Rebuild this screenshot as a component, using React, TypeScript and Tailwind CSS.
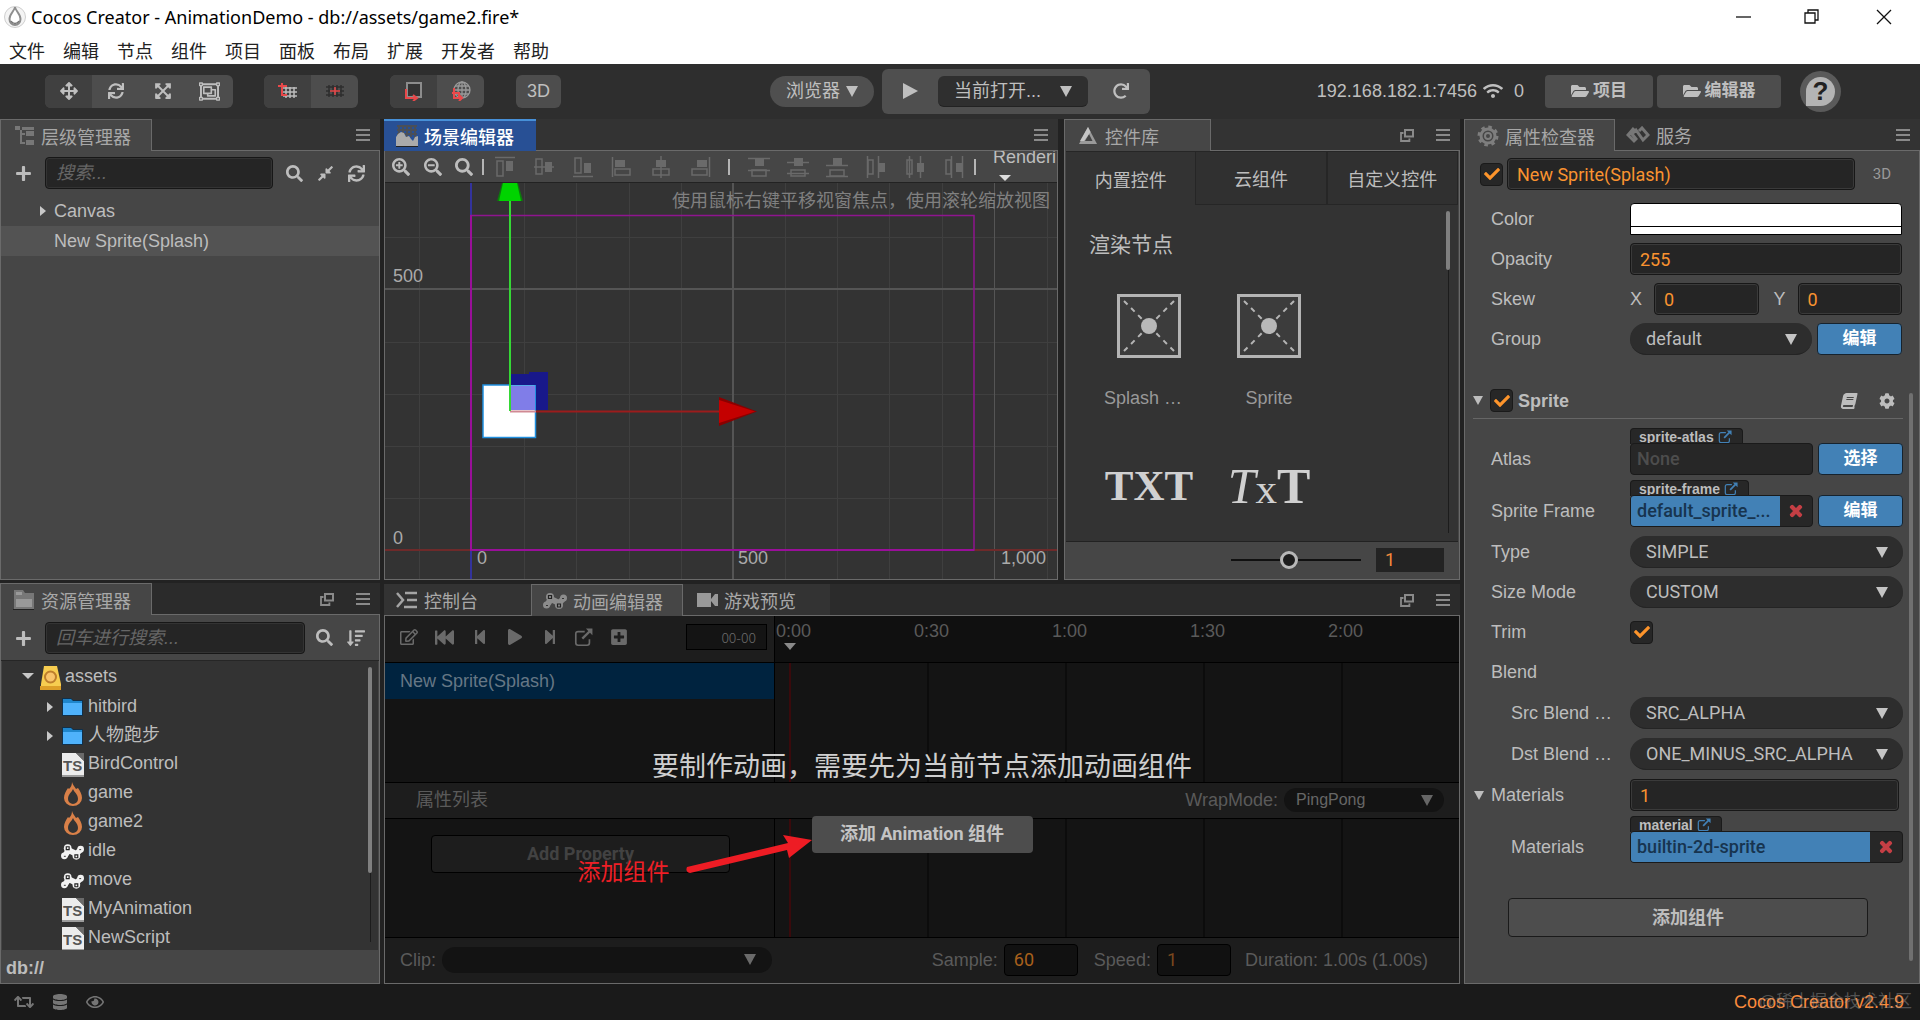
import { useState } from "react";
import type { ReactNode } from "react";
import {
  FaArrowsAlt,
  FaBook,
  FaCheck,
  FaCog,
  FaCompressAlt,
  FaDatabase,
  FaExpandArrowsAlt,
  FaFastBackward,
  FaFolderOpen,
  FaPlay,
  FaPlus,
  FaPlusSquare,
  FaRedo,
  FaRegEdit,
  FaRegEye,
  FaRegObjectGroup,
  FaRetweet,
  FaSearch,
  FaSearchMinus,
  FaSearchPlus,
  FaSortAmountDown,
  FaStepBackward,
  FaStepForward,
  FaSync,
  FaTimes,
  FaWifi,
} from "react-icons/fa";

const MENUS = ["文件", "编辑", "节点", "组件", "项目", "面板", "布局", "扩展", "开发者", "帮助"];

type AssetKind = "db" | "folder" | "ts" | "fire" | "anim";

type Asset = {
  name: string;
  kind: AssetKind;
};

const ASSETS: Asset[] = [
  { name: "hitbird", kind: "folder" },
  { name: "人物跑步", kind: "folder" },
  { name: "BirdControl", kind: "ts" },
  { name: "game", kind: "fire" },
  { name: "game2", kind: "fire" },
  { name: "idle", kind: "anim" },
  { name: "move", kind: "anim" },
  { name: "MyAnimation", kind: "ts" },
  { name: "NewScript", kind: "ts" },
];

const TIMES = ["0:00", "0:30", "1:00", "1:30", "2:00"];

/* ---------- icons ---------- */

function Caret({ className = "" }: { className?: string }) {
  return (
    <svg viewBox="0 0 12 11" className={`h-[11px] w-3 shrink-0 ${className}`} fill="currentColor">
      <path d="M0 0h12L6 11z" />
    </svg>
  );
}

function Fold({ open = false }: { open?: boolean }) {
  return (
    <svg viewBox="0 0 12 12" className="size-3 shrink-0" fill="#c8c8c8">
      {open ? <path d="M0 3h12L6 9z" /> : <path d="M3 1l6 5-6 5z" />}
    </svg>
  );
}

function MenuIcon() {
  return (
    <svg viewBox="0 0 14 12" className="h-3 w-[14px]" fill="#8a8a8a">
      <path d="M0 0h14v2H0zM0 5h14v2H0zM0 10h14v2H0z" />
    </svg>
  );
}

function PopoutIcon() {
  return (
    <svg viewBox="0 0 14 14" className="size-[14px]" fill="none" stroke="#8a8a8a" strokeWidth="1.8">
      <path d="M5 2h8v6.500H5z" strokeWidth="2" />
      <path d="M3.500 5H1v8h8.400v-2.500" />
    </svg>
  );
}

function LinkOutIcon({ className = "" }: { className?: string }) {
  return (
    <svg viewBox="0 0 16 16" className={className} fill="none" stroke="currentColor">
      <path d="M9 3H3.500Q1.500 3 1.500 5v7.500q0 2 2 2H11q2 0 2-2V9.500" strokeWidth="1.400" />
      <path d="M7 9l6.500-6.500" strokeWidth="2" />
      <path d="M10 .5h5.500V6z" fill="currentColor" stroke="none" />
    </svg>
  );
}

function CocosLogo() {
  return (
    <svg viewBox="0 0 24 24" className="size-6">
      <circle cx="12" cy="12" r="10.500" fill="#f4f4f4" stroke="#cfcfcf" />
      <path
        d="M12 2c.5 4 5.500 7 5.500 12a5.500 6 0 0 1-11 0c0-5 5-8 5.500-12z"
        fill="#fff"
        stroke="#8e8e8e"
        strokeWidth="2"
      />
      <path d="M8 16a4.500 4.500 0 0 0 8 0" fill="none" stroke="#777" strokeWidth="1.500" />
    </svg>
  );
}

function HierarchyIcon() {
  return (
    <svg viewBox="0 0 20 20" className="size-5" fill="#777">
      <path d="M0 0h5v4H0zM7 1h12v3H7zM5 4h2v14H5zM7 7h3v2H7zM7 16h3v2H7z" />
      <path d="M11 5h8v5h-8zM11 14h8v5h-8z" />
    </svg>
  );
}

function SceneIcon() {
  return (
    <svg viewBox="0 0 22 22" className="size-[22px]">
      <path
        d="M1 1h20M1 5h20M1 9h20M3 0v12M7 0v12M11 0v12M15 0v12M19 0v14"
        stroke="#4a4f58"
        strokeWidth="2"
      />
      <path d="M0 21v-9l2-3 3-2 3 1 2 4 3-1 2 3 2 2 2-4 3-1v10z" fill="#aaa" />
      <path d="M0 21.500h22" stroke="#222" />
    </svg>
  );
}

function WidgetIcon() {
  return (
    <svg viewBox="0 0 18 18" className="size-[18px]">
      <path d="M9 0L18 17H0z" fill="#9a9a9a" />
      <path d="M10 7l3.500 7H6z" fill="#444" />
      <path d="M9 0l2.500 5L5 14H1z" fill="#c4c4c4" />
    </svg>
  );
}

function InspectorIcon() {
  return (
    <svg viewBox="0 0 22 22" className="size-[22px]" fill="none" stroke="#7e7e7e">
      <circle cx="11" cy="11" r="9" strokeWidth="3" strokeDasharray="3.500 3.570" />
      <circle cx="11" cy="11" r="7" strokeWidth="3" />
      <circle cx="11" cy="11" r="3" strokeWidth="2" />
    </svg>
  );
}

function ServiceIcon() {
  return (
    <svg viewBox="0 0 24 18" className="h-[18px] w-6" fill="none" stroke="#777" strokeWidth="3">
      <path d="M8 2L2 9l6 6 2-2-4-5 4-4 7 10 5-5-6-7-3 3" />
    </svg>
  );
}

function AssetsIcon() {
  return (
    <svg viewBox="0 0 22 20" className="h-5 w-[22px]">
      <path d="M1 0h9l2 3h9v16H1z" fill="#777" />
      <path d="M3 2h6v3H3zM3 9h16v8H3z" fill="#999" />
      <path d="M0 19.500h21" stroke="#222" />
    </svg>
  );
}

function ConsoleIcon() {
  return (
    <svg viewBox="0 0 22 18" className="h-[18px] w-[22px]" fill="none" stroke="#a4a4a4" strokeWidth="2.500">
      <path d="M1 2l6 7-6 7M9 2h12M11 9h10M8 16h13" />
    </svg>
  );
}

function PreviewIcon() {
  return (
    <svg viewBox="0 0 21 14" className="h-[14px] w-[21px]" fill="#999">
      <path d="M0 0h14v14H0zM14 6l4-5h3v12h-3l-4-5z" />
    </svg>
  );
}

function AnimIcon({ color, className = "" }: { color: string; className?: string }) {
  return (
    <svg viewBox="0 0 24 16" className={className}>
      <path d="M4 12l4-6 8 4 4-4" stroke={color} strokeWidth="6" fill="none" />
      <g fill={color}>
        <circle cx="3.500" cy="12" r="3.500" />
        <circle cx="7" cy="4" r="4" />
        <circle cx="16" cy="12" r="4" />
        <circle cx="20.500" cy="5" r="3.500" />
      </g>
      <path d="M5.500 2.500h3v3h-3zM14.500 11h3v3h-3z" fill={color} stroke="#222" strokeWidth="1.200" />
      <path d="M3 12.500h2M19 5.500h2" stroke="#333" />
    </svg>
  );
}

function AssetIcon({ kind }: { kind: AssetKind }) {
  if (kind === "db") {
    return (
      <svg viewBox="0 0 22 24" className="h-6 w-[22px]">
        <path d="M4 0h13l4 18v6H1v-6z" fill="#f7cd50" />
        <path d="M0 20h21v4H0z" fill="#dd9f28" />
        <circle cx="10.500" cy="11" r="5.500" fill="#f9c46a" stroke="#bd7e2c" strokeWidth="2" />
      </svg>
    );
  }
  if (kind === "folder") {
    return (
      <svg viewBox="0 0 22 18" className="h-[18px] w-[22px]">
        <path d="M0 0h9l2 2h10v16H0z" fill="#11304a" />
        <path d="M1 1h8l2 2h9v14H1z" fill="#1f86cc" />
        <path d="M1 5h19v12H1z" fill="#4fb2fb" />
      </svg>
    );
  }
  if (kind === "ts") {
    return (
      <svg viewBox="0 0 22 24" className="h-6 w-[22px]">
        <path d="M0 0h14l8 8v15H0z" fill="#ececec" />
        <path d="M14 0h8v8z" fill="#6a6a6a" />
        <path d="M0 22h22v2H0z" fill="#9c9c9c" />
        <text x="1" y="18" fontSize="15" fontWeight="700" fill="#555">
          TS
        </text>
      </svg>
    );
  }
  if (kind === "fire") {
    return (
      <svg viewBox="0 0 20 24" className="h-6 w-5">
        <path
          d="M9 0c1 3 2 4 4 7l2-1c2 3 4 6 4 10a9 8 0 0 1-18 0c0-4 2-7 4-10l1 1c2-2 3-4 3-7z"
          fill="#d98048"
        />
        <path d="M10 7c1 3 5 5 5 10a5 5 0 0 1-10 0c0-5 4-7 5-10z" fill="#333" />
      </svg>
    );
  }
  return <AnimIcon color="#f2f2f2" className="h-4 w-6" />;
}

type AlignTool = {
  line: string;
  box: string;
  solid: string;
};

// guide, outline and solid shapes of each align / distribute tool
const ALIGN_TOOLS: AlignTool[] = [
  { line: "M1 1.500h20", box: "M3 5h6v15H3z", solid: "M12 5h7v10h-7z" },
  { line: "M1 11h20", box: "M3 3h6v15H3z", solid: "M12 6h7v10h-7z" },
  { line: "M1 20.500h20", box: "M3 2h6v15H3z", solid: "M12 7h7v10h-7z" },
  { line: "M1.500 1v20", box: "M4 13h15v6H4z", solid: "M4 4h10v7H4z" },
  { line: "M11 0v22", box: "M3 13h16v6H3z", solid: "M6 4h10v7H6z" },
  { line: "M20.500 1v20", box: "M3 13h15v6H3z", solid: "M8 4h10v7H8z" },
];

const DISTRIBUTE_TOOLS: AlignTool[] = [
  { line: "M0 2.500h22M0 14.500h22", box: "M4 14h14v6H4z", solid: "M7 3h9v7H7z" },
  { line: "M0 6.500h22M0 17.500h22", box: "M4 14h14v6H4z", solid: "M7 2h9v8H7z" },
  { line: "M0 9.500h22M0 20.500h22", box: "M4 14h14v6H4z", solid: "M7 2h9v8H7z" },
  { line: "M2.500 0v22M13.500 0v22", box: "M3 4h5v14H3z", solid: "M13 7h7v9h-7z" },
  { line: "M5.500 0v22M16.500 0v22", box: "M3 4h5v14H3z", solid: "M13 7h7v9h-7z" },
  { line: "M8.500 0v22M19.500 0v22", box: "M3 4h5v14H3z", solid: "M13 7h7v9h-7z" },
];

function AlignIcon({ tool }: { tool: AlignTool }) {
  return (
    <svg viewBox="0 0 22 22" className="size-[22px]" fill="none" stroke="#6a6a6a" strokeWidth="1.500">
      <path d={tool.line} />
      <path d={tool.box} />
      <path d={tool.solid} fill="#6a6a6a" stroke="none" />
    </svg>
  );
}

/* ---------- shared controls ---------- */

function Panel({
  header,
  popout = false,
  strip,
  children,
}: {
  header: ReactNode;
  popout?: boolean;
  strip: string;
  children: ReactNode;
}) {
  return (
    <section className="flex h-full min-h-0 min-w-0 flex-col">
      <header className={`flex h-8 shrink-0 ${strip}`}>
        {header}
        <div className="flex flex-1 items-center justify-end gap-[22px] border-b border-[#6a6a6a] pr-2.5">
          {popout && (
            <button type="button" aria-label="popout">
              <PopoutIcon />
            </button>
          )}
          <button type="button" aria-label="menu">
            <MenuIcon />
          </button>
        </div>
      </header>
      <div className="flex min-h-0 flex-1 flex-col border border-t-0 border-[#6a6a6a] bg-[#464646]">
        {children}
      </div>
    </section>
  );
}

function Tab({ icon, label, className }: { icon: ReactNode; label: string; className: string }) {
  return (
    <button
      type="button"
      className={`flex shrink-0 items-center gap-1.5 whitespace-nowrap border-[#6a6a6a] pl-3 ${className}`}
    >
      {icon}
      <span className="pt-1">{label}</span>
    </button>
  );
}

function Check({ label }: { label: string }) {
  const [checked, setChecked] = useState(true);

  return (
    <label className="relative flex size-[23px] shrink-0 items-center justify-center">
      <input
        type="checkbox"
        aria-label={label}
        checked={checked}
        onChange={(event) => setChecked(event.target.checked)}
        className="absolute inset-0 appearance-none rounded border border-[#1a1a1a] bg-[#272727]"
      />
      {checked && <FaCheck className="pointer-events-none relative size-4 text-[#fd942b]" />}
    </label>
  );
}

function Field({ id, value, className = "" }: { id: string; value: string; className?: string }) {
  return (
    <input
      id={id}
      aria-label={id}
      type="text"
      defaultValue={value}
      className={`h-8 min-w-0 rounded border border-[#171717] bg-[#252525] px-[9px] font-['Roboto','Noto_Sans_CJK_SC',sans-serif] text-[#f99330] shadow-[inset_0_0_0_1px_#3a3a3a] outline-none ${className}`}
    />
  );
}

function Dropdown({ id, value }: { id: string; value: string }) {
  return (
    <div className="relative flex flex-1 items-center">
      <select
        id={id}
        aria-label={id}
        className="h-8 w-full appearance-none rounded-full border-b border-[#242424] bg-[#2d2d2d] pl-4 font-['Roboto',sans-serif] text-[#bdbdbd] outline-none"
      >
        <option>{value}</option>
      </select>
      <Caret className="pointer-events-none absolute right-[15px] text-[#c4c4c4]" />
    </div>
  );
}

function BlueButton({ children }: { children: ReactNode }) {
  return (
    <button
      type="button"
      className="h-8 w-[85px] shrink-0 rounded border border-[#16232e] bg-[#4281b6] text-[17px] font-bold text-white"
    >
      {children}
    </button>
  );
}

function Row({
  id,
  label,
  indent = false,
  fold = false,
  children,
}: {
  id?: string;
  label: string;
  indent?: boolean;
  fold?: boolean;
  children?: ReactNode;
}) {
  return (
    <div className="flex h-8 items-center">
      <div className="flex w-[157px] shrink-0 items-center">
        <span className={indent ? "w-[38px]" : "w-[18px]"}>
          {fold && <Caret className="ml-px h-[10px] w-[10px]" />}
        </span>
        <label htmlFor={id}>{label}</label>
      </div>
      <div className="flex min-w-0 flex-1 items-center gap-[5px]">{children}</div>
    </div>
  );
}

function AssetSlot({ type, value }: { type: string; value?: string }) {
  return (
    <div className="relative h-8 min-w-0 flex-1">
      <div className="absolute bottom-[31px] left-0 flex h-4 items-center gap-1 rounded-t border border-b-0 border-[#1a1a1a] bg-[#272727] pr-2.5 pl-2 text-[14px] font-bold leading-4">
        {type}
        <LinkOutIcon className="size-[14px] text-[#4281b6]" />
      </div>
      <div className="relative flex h-8 items-stretch overflow-hidden rounded border border-[#1a1a1a] bg-[#272727] font-['Roboto',sans-serif] font-medium">
        {value ? (
          <>
            <div className="flex flex-1 items-center bg-[#4281b6] pl-1.5 text-[#17344f]">{value}</div>
            <button
              type="button"
              aria-label="clear"
              className="flex w-8 items-center justify-center text-[#c53f45]"
            >
              <FaTimes className="size-4" stroke="currentColor" strokeWidth="40" />
            </button>
          </>
        ) : (
          <div className="flex items-center pl-1.5 text-[#4d4d4d]">None</div>
        )}
      </div>
    </div>
  );
}

/* ---------- top bars ---------- */

function TitleBar() {
  return (
    <div className="flex h-[34px] shrink-0 items-center bg-white pl-[3px] text-black">
      <CocosLogo />
      <h1 className="ml-1 flex-1 font-['Noto_Sans',sans-serif] text-[18px]">
        Cocos Creator - AnimationDemo - db://assets/game2.fire*
      </h1>
      <svg viewBox="0 0 184 20" className="mr-[18px] h-5 w-[184px]" fill="none" stroke="#111" strokeWidth="1.300">
        <path d="M18 10h15" />
        <path d="M87 6h10v10H87zM90 6V3h10v10h-3" />
        <path d="M159 3l14 14M173 3l-14 14" />
      </svg>
    </div>
  );
}

function MenuBar() {
  return (
    <nav className="flex h-[30px] shrink-0 items-center gap-[18px] bg-white pl-[9px] text-[#222]">
      {MENUS.map((menu) => (
        <button type="button" key={menu} className="pt-1.5">
          {menu}
        </button>
      ))}
    </nav>
  );
}

const TOOL = "flex h-full w-[47px] items-center justify-center";

function Toolbar() {
  return (
    <div className="flex h-[55px] shrink-0 items-center bg-[#2e2e2e] pb-px pl-[45px] text-[#bfbfbf]">
      <div className="flex h-[33px] overflow-hidden rounded-md bg-[#4d4d4d]">
        <button type="button" aria-label="move" className={`${TOOL} bg-[#404040]`}>
          <FaArrowsAlt className="size-[18px]" />
        </button>
        <button type="button" aria-label="rotate" className={TOOL}>
          <FaSync className="size-4" />
        </button>
        <button type="button" aria-label="scale" className={TOOL}>
          <FaExpandArrowsAlt className="size-[18px]" />
        </button>
        <button type="button" aria-label="rect" className={TOOL}>
          <FaRegObjectGroup className="size-[21px]" />
        </button>
      </div>

      <div className="ml-[31px] flex h-[33px] overflow-hidden rounded-md bg-[#4d4d4d]">
        <button type="button" aria-label="anchor" className={`${TOOL} bg-[#404040]`}>
          <svg viewBox="0 0 20 16" className="h-4 w-5" fill="none">
            <path d="M5 5h14M5 9h14M5 13h14M8 4v11M12 4v11M16 4v11" stroke="#bbb" strokeWidth="1.500" />
            <path d="M0 3h9M4 0v12h5" stroke="#e8484a" strokeWidth="2" />
          </svg>
        </button>
        <button type="button" aria-label="center" className={TOOL}>
          <svg viewBox="0 0 20 16" className="h-4 w-5" fill="none">
            <path d="M1 4h18M1 8h18M1 12h18M4 2v12M8 2v12M12 2v12M16 2v12" stroke="#2e2e2e" strokeWidth="1.500" />
            <path d="M5 8h10M10 4v8" stroke="#e8484a" strokeWidth="1.500" />
          </svg>
        </button>
      </div>

      <div className="ml-8 flex h-[33px] overflow-hidden rounded-md bg-[#4d4d4d]">
        <button type="button" aria-label="local" className={`${TOOL} bg-[#404040]`}>
          <svg viewBox="0 0 20 20" className="size-5" fill="none">
            <path d="M3 2h14v14H3z" stroke="#8c8c8c" strokeWidth="2" fill="#333" />
            <path d="M2 8v9h10M9 14l4 3-4 3" stroke="#e8484a" strokeWidth="2" />
          </svg>
        </button>
        <button type="button" aria-label="global" className={TOOL}>
          <svg viewBox="0 0 20 20" className="size-5" fill="none">
            <g stroke="#999" strokeWidth="1.300">
              <circle cx="11" cy="9" r="8" />
              <ellipse cx="11" cy="9" rx="4" ry="8" />
              <path d="M3 9h16M11 1v16M4 5h14M4 13h14" />
            </g>
            <path d="M3 7v10h7M8 14l3 3-3 3M1 12h7v5" stroke="#e8484a" strokeWidth="2" />
          </svg>
        </button>
      </div>

      <button type="button" className="ml-8 h-[33px] w-[45px] rounded-md bg-[#4d4d4d]">
        3D
      </button>

      <div className="ml-[209px] flex items-center gap-2">
        <button type="button" className="flex h-[31px] items-center gap-1.5 rounded-full bg-[#4f4f4f] px-4">
          浏览器
          <Caret />
        </button>
        <div className="flex h-[45px] items-center rounded-md bg-[#4f4f4f]">
          <button type="button" aria-label="play" className="flex w-[56px] justify-center">
            <svg viewBox="0 0 15 16" className="h-4 w-[15px]" fill="currentColor">
              <path d="M0 0l15 8-15 8z" />
            </svg>
          </button>
          <div className="relative flex items-center">
            <select
              aria-label="scene"
              className="h-[31px] w-[150px] appearance-none rounded-md border-b border-[#222] bg-[#2f2f2f] pl-4 outline-none"
            >
              <option>当前打开...</option>
            </select>
            <Caret className="pointer-events-none absolute right-4" />
          </div>
          <button type="button" aria-label="reload" className="flex w-[62px] justify-center pl-1">
            <FaRedo className="size-4" />
          </button>
        </div>
      </div>

      <div className="ml-auto flex items-center">
        <span>192.168.182.1:7456</span>
        <FaWifi className="ml-1.5 size-5" />
        <span className="ml-[11px]">0</span>
        <button
          type="button"
          className="ml-[21px] flex h-[33px] w-[108px] items-center justify-center gap-1 rounded bg-[#4d4d4d] text-[17px] font-bold"
        >
          <FaFolderOpen className="size-[18px]" />
          项目
        </button>
        <button
          type="button"
          className="ml-1 flex h-[33px] w-[124px] items-center justify-center gap-1 rounded bg-[#4d4d4d] text-[17px] font-bold"
        >
          <FaFolderOpen className="size-[18px]" />
          编辑器
        </button>
        <button
          type="button"
          aria-label="help"
          className="mr-[79px] ml-[19px] flex size-[41px] items-center justify-center rounded-full bg-[#5a5a5a]"
        >
          <span className="flex size-[29px] items-center justify-center rounded-full rounded-bl-md bg-[#b4b4b4] text-[26px] font-bold text-[#222]">
            ?
          </span>
        </button>
      </div>
    </div>
  );
}

/* ---------- left column ---------- */

function SearchBox({ placeholder }: { placeholder: string }) {
  return (
    <input
      type="search"
      aria-label={placeholder}
      placeholder={placeholder}
      className="h-8 min-w-0 flex-1 rounded border border-[#171717] bg-[#252525] px-2.5 shadow-[inset_0_0_0_1px_#333] outline-none placeholder:text-[#666] placeholder:italic"
    />
  );
}

function Hierarchy() {
  return (
    <Panel
      strip="bg-[#333333]"
      header={
        <Tab
          icon={<HierarchyIcon />}
          label="层级管理器"
          className="w-[152px] border border-b-0 bg-[#464646] pl-3.5 text-[#a8a8a8]"
        />
      }
    >
      <div className="flex items-center gap-[13px] px-3.5 pt-1.5">
        <button type="button" aria-label="add">
          <FaPlus className="size-[17px]" />
        </button>
        <SearchBox placeholder="搜索..." />
        <div className="flex gap-[14px]">
          <FaSearch className="size-[17px]" />
          <FaCompressAlt className="size-[17px]" />
          <FaSync className="size-[17px]" />
        </div>
      </div>
      <ul className="pt-[7px]">
        <li className="flex h-[30px] items-center gap-[5px] pl-9">
          <Fold />
          Canvas
        </li>
        <li className="flex h-[30px] items-center bg-[#535353] pl-[53px]">New Sprite(Splash)</li>
      </ul>
    </Panel>
  );
}

function AssetsPanel() {
  return (
    <Panel
      popout
      strip="bg-[#2b2b2b]"
      header={
        <Tab
          icon={<AssetsIcon />}
          label="资源管理器"
          className="w-[152px] border border-b-0 bg-[#464646] text-[#a8a8a8]"
        />
      }
    >
      <div className="flex items-center gap-[11px] border-b border-[#262626] px-3.5 pt-[7px] pb-1.5">
        <button type="button" aria-label="add" className="mr-0.5">
          <FaPlus className="size-[17px]" />
        </button>
        <SearchBox placeholder="回车进行搜索..." />
        <div className="flex gap-[14px]">
          <FaSearch className="size-[17px]" />
          <FaSortAmountDown className="size-[18px]" />
        </div>
      </div>
      <div className="mx-px flex min-h-0 flex-1 bg-[#333333]">
        <ul className="flex-1 overflow-hidden">
          <li className="flex h-[29px] items-center gap-[3px] pl-5">
            <Fold open />
            <span className="flex w-[25px] justify-end pt-1">
              <AssetIcon kind="db" />
            </span>
            <span>assets</span>
          </li>
          {ASSETS.map((asset) => (
            <li key={asset.name} className="flex h-[29px] items-center pl-[42px]">
              <span className="flex w-[17px] pt-1">{asset.kind === "folder" && <Fold />}</span>
              <span className="flex w-[27px] shrink-0 justify-center pt-1 pr-1">
                <AssetIcon kind={asset.kind} />
              </span>
              <span className={asset.kind === "folder" ? "pt-0.5" : ""}>{asset.name}</span>
            </li>
          ))}
        </ul>
        <div className="mt-1.5 mr-[6px] mb-2 flex w-1 flex-col items-center bg-[linear-gradient(#1c1c1c,#1c1c1c)] bg-[length:1px_100%] bg-center bg-no-repeat">
          <div className="h-3/4 w-1 rounded-full bg-[#808080]" />
        </div>
      </div>
      <div className="flex h-[33px] shrink-0 items-center pt-0.5 pl-[5px] font-bold">db://</div>
    </Panel>
  );
}

/* ---------- scene ---------- */

const GRID_X = [34, 139, 191, 244, 296, 400, 452, 504, 557, 662];
const GRID_Y = [54, 159, 211, 263, 315];

function SceneCanvas() {
  return (
    <div className="relative min-h-0 flex-1 overflow-hidden bg-[#333333]">
      <svg className="absolute inset-0 size-full">
        <g stroke="#3f3f3f">
          {GRID_X.map((x) => (
            <line key={x} x1={x + 0.5} x2={x + 0.5} y1="0" y2="100%" />
          ))}
          {GRID_Y.map((y) => (
            <line key={y} x1="0" x2="100%" y1={y + 0.5} y2={y + 0.5} />
          ))}
        </g>
        <g stroke="#555">
          <line x1="348" x2="348" y1="0" y2="100%" strokeWidth="2" />
          <line x1="609.500" x2="609.500" y1="0" y2="100%" />
          <line x1="0" x2="100%" y1="106" y2="106" strokeWidth="2" />
        </g>
        <line x1="86" x2="86" y1="0" y2="100%" stroke="#33339c" strokeWidth="2" />
        <line x1="0" x2="100%" y1="367" y2="367" stroke="#6e2a2a" strokeWidth="2" />
        <rect x="86" y="32.500" width="503" height="334.500" fill="none" stroke="#8f158f" strokeWidth="1.500" />
        <path d="M86 32v335h503" fill="none" stroke="#990f99" strokeWidth="2" />
        <rect x="98" y="202" width="52.500" height="52.500" fill="#fff" stroke="#2090e0" strokeWidth="1.500" />
        <path d="M126 191h18v-2h19v38h-12v-25h-25z" fill="#18188a" />
        <rect x="126" y="203" width="24" height="24" fill="#807de8" />
        <line x1="125" x2="151" y1="228.500" y2="228.500" stroke="#d08a94" strokeWidth="2" />
        <line x1="151" x2="336" y1="228.500" y2="228.500" stroke="#9c1c1c" strokeWidth="2" />
        <path d="M334 214l38 14.500L334 243z" fill="#8a0000" />
        <path d="M334 217l36 11.500L334 240z" fill="#c40000" />
        <line x1="125" x2="125" y1="16" y2="228" stroke="#35d835" strokeWidth="2" />
        <path d="M117 0h16l5 18h-26z" fill="#0d7a0d" />
        <path d="M118 0h14l4 18h-22z" fill="#00d400" />
        <g fill="#aaa" fontSize="18">
          <text x="8" y="99">500</text>
          <text x="8" y="361">0</text>
          <text x="92" y="381">0</text>
          <text x="353" y="381">500</text>
          <text x="616" y="381">1,000</text>
        </g>
      </svg>
      <p className="relative pt-1.5 pr-[7px] text-right text-[#808080]">
        使用鼠标右键平移视窗焦点，使用滚轮缩放视图
      </p>
    </div>
  );
}

function ScenePanel() {
  return (
    <Panel
      strip="bg-[#333333]"
      header={
        <Tab
          icon={<SceneIcon />}
          label="场景编辑器"
          className="w-[152px] border-t-2 border-[#4790d8]! bg-[#285095] font-medium text-white"
        />
      }
    >
      <div className="flex h-8 shrink-0 items-center overflow-hidden border-b border-[#222] pl-[7px]">
        <div className="flex w-[81px] shrink-0 justify-between">
          <FaSearchPlus className="size-[18px]" />
          <FaSearchMinus className="size-[18px]" />
          <FaSearch className="size-[18px]" />
        </div>
        <i className="ml-[9px] h-4 w-0.5 bg-[#b5b5b5]" />
        <div className="ml-[10px] flex gap-[17px]">
          {ALIGN_TOOLS.map((tool) => (
            <AlignIcon key={tool.line} tool={tool} />
          ))}
        </div>
        <i className="ml-[17px] h-4 w-0.5 shrink-0 bg-[#b5b5b5]" />
        <div className="ml-[18px] flex gap-[17px]">
          {DISTRIBUTE_TOOLS.map((tool) => (
            <AlignIcon key={tool.line} tool={tool} />
          ))}
        </div>
        <i className="ml-[9px] h-4 w-0.5 shrink-0 bg-[#b5b5b5]" />
        <button type="button" className="ml-[17px] flex h-10 flex-col leading-5">
          Renderi
          <svg viewBox="0 0 12 6" className="mt-2 ml-[6px] h-1.5 w-3 shrink-0" fill="#ddd">
            <path d="M0 0h12L6 6z" />
          </svg>
        </button>
      </div>
      <SceneCanvas />
    </Panel>
  );
}

/* ---------- widget library ---------- */

function SpriteGlyph() {
  return (
    <svg viewBox="0 0 64 64" className="size-16" fill="none" stroke="#b4b4b4">
      <rect x="1.500" y="1.500" width="61" height="61" strokeWidth="3" fill="#3c3c3c" />
      <path d="M7 7l18 18M57 7L39 25M7 57l18-18M57 57L39 39" strokeWidth="2" strokeDasharray="5 5" />
      <circle cx="32" cy="32" r="8" fill="#b8b8b8" stroke="none" />
    </svg>
  );
}

function WidgetPanel() {
  const [scale, setScale] = useState(44);

  return (
    <Panel
      popout
      strip="bg-[#333333]"
      header={
        <Tab
          icon={<WidgetIcon />}
          label="控件库"
          className="w-[147px] gap-2 border border-b-0 bg-[#464646] pl-3.5 text-[#a8a8a8]"
        />
      }
    >
      <div className="mx-px grid h-[54px] shrink-0 grid-cols-[129fr_131fr_131fr]">
        <button type="button" className="border-t border-[#262626] bg-[#333333] pt-1">
          内置控件
        </button>
        <button type="button" className="border border-[#262626] bg-[#303030] pt-1">
          云组件
        </button>
        <button type="button" className="border border-[#262626] bg-[#303030] pt-1">
          自定义控件
        </button>
      </div>
      <div className="mx-px flex min-h-0 flex-1 border-b border-[#222] bg-[#333333]">
        <div className="flex-1 overflow-hidden">
          <h2 className="mt-[26px] ml-[23px] text-[21px] leading-7">渲染节点</h2>
          <div className="mt-[35px] ml-[23px] grid w-[240px] grid-cols-2 text-center text-[#999]">
            <div className="flex flex-col items-center gap-7">
              <SpriteGlyph />
              <span className="pr-3">Splash …</span>
            </div>
            <div className="flex flex-col items-center gap-7">
              <SpriteGlyph />
              <span>Sprite</span>
            </div>
            <div className="mt-[52px] font-['Liberation_Serif',serif] text-[43px] font-bold leading-[48px] text-[#d0d0d0]">
              TXT
            </div>
            <div className="mt-[52px] font-['Liberation_Serif',serif] text-[50px] leading-[48px] text-[#d0d0d0]">
              <i>T</i>
              <span className="text-[43px]">x</span>
              <b>T</b>
            </div>
          </div>
        </div>
        <div className="mt-1.5 mr-2 mb-2 flex w-1 flex-col items-center bg-[linear-gradient(#1c1c1c,#1c1c1c)] bg-[length:1px_100%] bg-center bg-no-repeat">
          <div className="h-[59px] w-1 rounded-full bg-[#808080]" />
        </div>
      </div>
      <div className="flex h-[37px] shrink-0 items-center justify-end gap-[15px] pr-[15px] pb-0.5">
        <input
          type="range"
          aria-label="size"
          value={scale}
          onChange={(event) => setScale(Number(event.target.value))}
          className="h-5 w-[130px] appearance-none bg-[linear-gradient(#111,#111)] bg-[length:100%_2px] bg-center bg-no-repeat [&::-webkit-slider-thumb]:size-[18px] [&::-webkit-slider-thumb]:appearance-none [&::-webkit-slider-thumb]:rounded-full [&::-webkit-slider-thumb]:border-[3px] [&::-webkit-slider-thumb]:border-solid [&::-webkit-slider-thumb]:border-[#b8b8b8] [&::-webkit-slider-thumb]:bg-[#1c1c1c]"
        />
        <input
          type="text"
          aria-label="scale"
          defaultValue="1"
          className="h-6 w-[68px] bg-[#232323] px-[9px] font-['Roboto',sans-serif] text-[#f28a3c] outline-none"
        />
      </div>
    </Panel>
  );
}

/* ---------- animation editor ---------- */

function TimelineGrid() {
  return (
    <div className="flex min-w-0 flex-1 overflow-hidden border-l border-black pl-[14px]">
      {TIMES.map((time, index) => (
        <div
          key={time}
          className={`w-[138px] shrink-0 border-l-2 ${index === 0 ? "border-[#3a0a0c]" : "border-[#0c0c0c]"}`}
        />
      ))}
    </div>
  );
}

function Annotation() {
  return (
    <div className="pointer-events-none absolute top-[14px] right-full flex gap-3.5 whitespace-nowrap">
      <span className="mt-7 text-[23px] leading-7 text-[#ee1f26]">添加组件</span>
      <svg viewBox="0 0 128 48" className="h-12 w-32" fill="#ee1c24">
        <path d="M3 37L104 13l-5-8 29 5-23 18-2-8L6 43q-5-1-3-6z" />
      </svg>
    </div>
  );
}

function AnimationPanel() {
  return (
    <Panel
      popout
      strip="bg-[#2b2b2b]"
      header={
        <>
          <Tab icon={<ConsoleIcon />} label="控制台" className="w-[147px] border-b bg-[#333333] text-[#a8a8a8]" />
          <Tab
            icon={<AnimIcon color="#8c8c8c" className="h-4 w-6" />}
            label="动画编辑器"
            className="w-[152px] gap-1 border border-b-0 bg-[#464646] pl-[11px] text-[#a8a8a8]"
          />
          <Tab
            icon={<PreviewIcon />}
            label="游戏预览"
            className="w-[147px] border-b bg-[#333333] pl-3.5 text-[#a8a8a8]"
          />
        </>
      }
    >
      <div className="relative flex min-h-0 flex-1 flex-col bg-[#141414] text-[#5a5a5a]">
        <div className="flex h-[47px] shrink-0 border-b border-black">
          <div className="flex w-[389px] items-center bg-[#1d1d1d] pr-[7px] pb-1 pl-[15px] text-[#6a6a6a]">
            <FaRegEdit className="size-[18px]" />
            <FaFastBackward className="ml-[17px] size-[19px]" />
            <FaStepBackward className="ml-[18px] size-4" />
            <FaPlay className="ml-[19px] size-4" />
            <FaStepForward className="ml-[19px] size-4" />
            <LinkOutIcon className="ml-4 size-[19px]" />
            <FaPlusSquare className="ml-[17px] size-[18px]" />
            <input
              type="text"
              aria-label="frame"
              defaultValue="00-00"
              className="ml-auto h-[26px] w-[81px] border border-black bg-[#141414] pr-2.5 text-right font-['Noto_Sans_CJK_SC',sans-serif] text-[14px] font-light outline-none"
            />
          </div>
          <div className="flex min-w-0 flex-1 overflow-hidden border-l border-black bg-[#101010] pt-[3px]">
            {TIMES.map((time, index) => (
              <div key={time} className="w-[138px] shrink-0 pl-px">
                {time}
                {index === 0 && (
                  <svg viewBox="0 0 12 7" className="ml-2 h-[7px] w-3" fill="#8a8a8a">
                    <path d="M0 0h12L6 7z" />
                  </svg>
                )}
              </div>
            ))}
          </div>
        </div>

        <div className="flex min-h-0 flex-1">
          <div className="w-[389px]">
            <div className="flex h-9 items-center bg-[#00233f] pl-[15px] text-[#667785]">New Sprite(Splash)</div>
          </div>
          <TimelineGrid />
        </div>

        <div className="flex h-[37px] shrink-0 items-center border-y border-black bg-[#1d1d1d] pr-[15px] pl-[31px]">
          属性列表
          <label htmlFor="wrap" className="ml-auto">
            WrapMode:
          </label>
          <div className="relative ml-1.5 flex items-center text-[#666]">
            <select
              id="wrap"
              className="h-6 w-[160px] appearance-none rounded-full bg-[#131313] pl-3 text-[16px] outline-none"
            >
              <option>PingPong</option>
            </select>
            <Caret className="pointer-events-none absolute right-[11px]" />
          </div>
        </div>

        <div className="flex min-h-0 flex-1">
          <div className="w-[389px] pt-4 pr-[44px] pl-[46px]">
            <button
              type="button"
              className="h-[38px] w-full rounded border border-black bg-[#1d1d1d] font-['Roboto',sans-serif] font-bold text-[#424242]"
            >
              Add Property
            </button>
          </div>
          <TimelineGrid />
        </div>

        <div className="flex h-[46px] shrink-0 items-center border-t border-black bg-[#1d1d1d] pr-[31px] pb-0.5 pl-[15px]">
          <label htmlFor="clip">Clip:</label>
          <div className="relative ml-1.5 flex w-[330px] items-center text-[#6a6a6a]">
            <select id="clip" className="h-[26px] w-full appearance-none rounded-full bg-[#131313] outline-none" />
            <Caret className="pointer-events-none absolute right-4" />
          </div>
          <label htmlFor="sample" className="ml-auto">
            Sample:
          </label>
          <input
            id="sample"
            type="text"
            defaultValue="60"
            className="ml-1.5 h-8 w-[74px] rounded border border-black bg-[#111] px-[9px] font-['Roboto',sans-serif] text-[#a8601c] outline-none"
          />
          <label htmlFor="speed" className="ml-4">
            Speed:
          </label>
          <input
            id="speed"
            type="text"
            defaultValue="1"
            className="ml-1.5 h-8 w-[74px] rounded border border-black bg-[#111] px-[9px] font-['Roboto',sans-serif] text-[#7a481e] outline-none"
          />
          <span className="ml-3.5">Duration: 1.00s (1.00s)</span>
        </div>

        <div className="absolute inset-0 flex flex-col items-center justify-center gap-[29px]">
          <p className="text-[27px] leading-10 text-[#cfcfcf]">要制作动画，需要先为当前节点添加动画组件</p>
          <div className="relative">
            <button
              type="button"
              className="h-[37px] w-[221px] rounded bg-[#4d4d4d] font-['Roboto','Noto_Sans_CJK_SC',sans-serif] font-bold text-[#c4c4c4]"
            >
              添加 Animation 组件
            </button>
            <Annotation />
          </div>
        </div>
      </div>
    </Panel>
  );
}

/* ---------- inspector ---------- */

function Inspector() {
  return (
    <Panel
      strip="bg-[#333333]"
      header={
        <>
          <Tab
            icon={<InspectorIcon />}
            label="属性检查器"
            className="w-[151px] border border-b-0 bg-[#464646] text-[#a8a8a8]"
          />
          <Tab icon={<ServiceIcon />} label="服务" className="w-[90px] border-b pl-[11px] text-[#a8a8a8]" />
        </>
      }
    >
      <div className="flex min-h-0 flex-1 flex-col pt-[7px] pl-2">
        <div className="flex items-center gap-1 pr-[28px] pl-[7px]">
          <Check label="active" />
          <Field id="name" value="New Sprite(Splash)" className="flex-1" />
          <span className="ml-[14px] font-['Roboto',sans-serif] text-[15px] text-[#999]">3D</span>
        </div>

        <div className="mt-[13px] flex flex-col gap-2 pr-[17px]">
          <Row id="color" label="Color">
            <button
              id="color"
              type="button"
              className="flex h-8 flex-1 flex-col overflow-hidden rounded-t border border-black bg-white"
            >
              <span className="h-[23px] w-full border-b border-black" />
            </button>
          </Row>
          <Row id="opacity" label="Opacity">
            <Field id="opacity" value="255" className="flex-1" />
          </Row>
          <Row label="Skew">
            <label htmlFor="skew-x" className="w-[19px]">
              X
            </label>
            <Field id="skew-x" value="0" className="flex-1" />
            <label htmlFor="skew-y" className="ml-2.5 w-[19px]">
              Y
            </label>
            <Field id="skew-y" value="0" className="flex-1" />
          </Row>
          <Row id="group" label="Group">
            <Dropdown id="group" value="default" />
            <BlueButton>编辑</BlueButton>
          </Row>
        </div>

        <div className="mt-7 flex min-h-0 flex-1">
          <div className="flex min-w-0 flex-1 flex-col">
            <div className="flex h-9 shrink-0 items-center border-b border-[#666] pr-2">
              <Caret className="mr-[7px] h-[10px] w-[10px]" />
              <Check label="sprite-enabled" />
              <h2 className="ml-[5px] flex-1 font-bold">Sprite</h2>
              <FaBook className="size-4 -skew-x-12" />
              <FaCog className="ml-[22px] size-4" />
            </div>
            <div className="mt-6 flex flex-col gap-5">
              <Row label="Atlas">
                <AssetSlot type="sprite-atlas" />
                <BlueButton>选择</BlueButton>
              </Row>
              <Row label="Sprite Frame">
                <AssetSlot type="sprite-frame" value="default_sprite_..." />
                <BlueButton>编辑</BlueButton>
              </Row>
            </div>
            <div className="mt-[9px] flex flex-col gap-2">
              <Row id="type" label="Type">
                <Dropdown id="type" value="SIMPLE" />
              </Row>
              <Row id="size-mode" label="Size Mode">
                <Dropdown id="size-mode" value="CUSTOM" />
              </Row>
              <Row label="Trim">
                <Check label="trim" />
              </Row>
              <Row label="Blend" />
            </div>
            <div className="mt-[9px] flex flex-col gap-[9px]">
              <Row id="src-blend" label="Src Blend …" indent>
                <Dropdown id="src-blend" value="SRC_ALPHA" />
              </Row>
              <Row id="dst-blend" label="Dst Blend …" indent>
                <Dropdown id="dst-blend" value="ONE_MINUS_SRC_ALPHA" />
              </Row>
              <Row id="materials" label="Materials" fold>
                <Field id="materials" value="1" className="mr-1 flex-1" />
              </Row>
            </div>
            <div className="mt-5">
              <Row label="Materials" indent>
                <AssetSlot type="material" value="builtin-2d-sprite" />
              </Row>
            </div>
            <button
              type="button"
              className="mx-[35px] mt-[35px] h-[39px] shrink-0 rounded border border-[#1a1a1a] bg-[#4d4d4d] font-bold text-[#bdbdbd]"
            >
              添加组件
            </button>
          </div>
          <div className="mx-[6px] mt-2.5 mb-[22px] w-1 shrink-0 rounded-full bg-[#707070]" />
        </div>
      </div>
    </Panel>
  );
}

function StatusBar() {
  return (
    <footer className="flex h-9 shrink-0 items-center gap-[18px] bg-[#1a1a1a] pr-4 pl-[14px] text-[#757575]">
      <FaRetweet className="size-5" />
      <FaDatabase className="size-4" />
      <FaRegEye className="size-[18px]" />
      <div className="relative ml-auto text-[#fb8b3c]">
        Cocos Creator v2.4.9
        <span className="absolute top-0 -right-2 text-[17px] whitespace-nowrap text-[#9a9a9a]/45">
          @稀土掘金技术社区
        </span>
      </div>
    </footer>
  );
}

export default function App() {
  return (
    <div className="flex h-screen flex-col overflow-hidden bg-[#222222] font-['Liberation_Sans','Noto_Sans_CJK_SC',sans-serif] text-[18px] leading-6 text-[#bdbdbd]">
      <TitleBar />
      <MenuBar />
      <Toolbar />
      <main className="flex min-h-0 flex-1 gap-1">
        <div className="flex w-[380px] shrink-0 flex-col gap-[3px]">
          <div className="min-h-0 flex-[461]">
            <Hierarchy />
          </div>
          <div className="min-h-0 flex-[401]">
            <AssetsPanel />
          </div>
        </div>
        <div className="flex min-w-0 flex-1 flex-col gap-1">
          <div className="flex min-h-0 flex-[461] gap-1.5">
            <div className="min-w-0 flex-1">
              <ScenePanel />
            </div>
            <div className="w-[396px] shrink-0">
              <WidgetPanel />
            </div>
          </div>
          <div className="min-h-0 flex-[400]">
            <AnimationPanel />
          </div>
        </div>
        <div className="w-[456px] shrink-0">
          <Inspector />
        </div>
      </main>
      <StatusBar />
    </div>
  );
}
